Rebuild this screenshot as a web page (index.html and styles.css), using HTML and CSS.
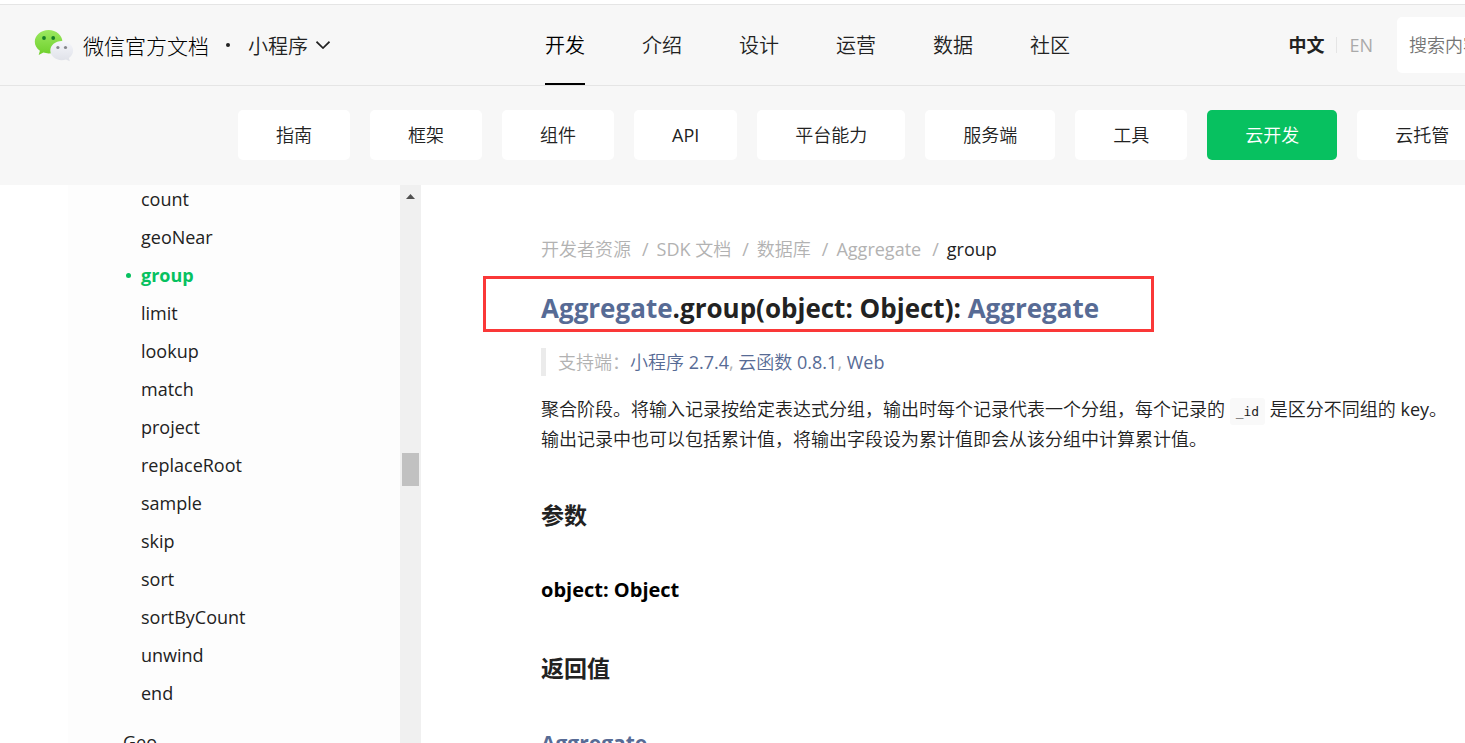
FILE: index.html
```html
<!DOCTYPE html>
<html lang="zh-CN">
<head>
<meta charset="utf-8">
<title>Aggregate.group | 微信开放文档</title>
<link rel="stylesheet" href="styles.css">
</head>
<body>
<header class="header">
  <div class="brand">
    <svg class="logo" viewBox="0 0 40 34" aria-hidden="true">
      <defs>
        <linearGradient id="green" x1="0" y1="0" x2="0" y2="1"><stop offset="0" stop-color="#9be860"/><stop offset="1" stop-color="#6fd02c"/></linearGradient>
        <linearGradient id="pale" x1="0" y1="0" x2="0" y2="1"><stop offset="0" stop-color="#f5f6fb"/><stop offset="1" stop-color="#dfe1e8"/></linearGradient>
      </defs>
      <path fill="url(#green)" d="M14.600 2C7 2 .8 7.200.8 13.700c0 3.700 2 6.900 5.100 9.100l-1.200 4.100 4.700-2.300c1.600.5 3.400.8 5.200.8 7.600 0 13.800-5.200 13.800-11.700S22.200 2 14.600 2z"/>
      <circle cx="10" cy="10" r="1.900" fill="#187e28"/><circle cx="19.200" cy="10" r="1.900" fill="#187e28"/>
      <path fill="url(#pale)" d="M27.700 13c6.300 0 11.400 4.300 11.400 9.600 0 3-1.600 5.600-4.200 7.400l.9 3.200-3.800-1.800c-1.300.5-2.800.8-4.300.8-6.300 0-11.400-4.300-11.400-9.600S21.400 13 27.700 13z"/>
      <circle cx="23.900" cy="19.500" r="1.600" fill="#85878c"/><circle cx="31.500" cy="19.500" r="1.600" fill="#85878c"/>
    </svg>
    <a class="brand-name" href="#">微信官方文档</a>
    <span class="brand-dot"></span>
    <button class="product" type="button">小程序
      <svg class="chevron" viewBox="0 0 14 8" aria-hidden="true"><path d="M.5.700l6.500 6.300 6.500-6.300" fill="none" stroke="currentColor" stroke-width="1.700"/></svg>
    </button>
  </div>
  <nav class="nav">
    <a class="nav-link nav-active" href="#">开发</a>
    <a class="nav-link" href="#">介绍</a>
    <a class="nav-link" href="#">设计</a>
    <a class="nav-link" href="#">运营</a>
    <a class="nav-link" href="#">数据</a>
    <a class="nav-link" href="#">社区</a>
  </nav>
  <div class="tools">
    <a class="lang lang-active" href="#">中文</a>
    <a class="lang lang-other" href="#">EN</a>
    <input class="search" type="search" placeholder="搜索内容" aria-label="搜索内容">
  </div>
</header>
<nav class="tabs">
  <a class="tab" href="#">指南</a>
  <a class="tab" href="#">框架</a>
  <a class="tab" href="#">组件</a>
  <a class="tab" href="#">API</a>
  <a class="tab" href="#">平台能力</a>
  <a class="tab" href="#">服务端</a>
  <a class="tab" href="#">工具</a>
  <a class="tab tab-active" href="#">云开发</a>
  <a class="tab" href="#">云托管</a>
</nav>
<div class="main">
  <aside class="sidebar">
    <ul class="menu">
      <li><a class="item" href="#">count</a></li>
      <li><a class="item" href="#">geoNear</a></li>
      <li><a class="item item-active" href="#">group</a></li>
      <li><a class="item" href="#">limit</a></li>
      <li><a class="item" href="#">lookup</a></li>
      <li><a class="item" href="#">match</a></li>
      <li><a class="item" href="#">project</a></li>
      <li><a class="item" href="#">replaceRoot</a></li>
      <li><a class="item" href="#">sample</a></li>
      <li><a class="item" href="#">skip</a></li>
      <li><a class="item" href="#">sort</a></li>
      <li><a class="item" href="#">sortByCount</a></li>
      <li><a class="item" href="#">unwind</a></li>
      <li><a class="item" href="#">end</a></li>
      <li><a class="item item-parent" href="#">Geo</a></li>
    </ul>
    <div class="scrollbar">
      <svg class="scroll-up" viewBox="0 0 9 5" aria-hidden="true"><path d="M0 5L4.500 0 9 5z" fill="#505050"/></svg>
      <div class="thumb"></div>
    </div>
  </aside>
  <main class="content">
    <nav class="crumbs">
      <a href="#">开发者资源</a><a href="#">SDK 文档</a><a href="#">数据库</a><a href="#">Aggregate</a><span class="current">group</span>
    </nav>
    <h1 class="title"><a href="#">Aggregate</a>.group(object: Object): <a href="#">Aggregate</a></h1>
    <blockquote class="support">支持端：<a href="#">小程序 2.7.4</a>, <a href="#">云函数 0.8.1</a>, <a href="#">Web</a></blockquote>
    <p class="text">聚合阶段。将输入记录按给定表达式分组，输出时每个记录代表一个分组，每个记录的 <code class="code">_id</code> 是区分不同组的 key。<br>输出记录中也可以包括累计值，将输出字段设为累计值即会从该分组中计算累计值。</p>
    <h2 class="section">参数</h2>
    <h3 class="type">object: Object</h3>
    <h2 class="section">返回值</h2>
    <h3 class="type type-link"><a href="#">Aggregate</a></h3>
  </main>
</div>
</body>
</html>
```

FILE: styles.css
```css
* { box-sizing: border-box; }
body {
  margin: 0;
  height: 100vh;
  display: flex;
  flex-direction: column;
  overflow: hidden;
  background: #fff;
  color: #222;
  font-family: "Open Sans", "Noto Sans CJK SC DemiLight", "Noto Sans CJK SC", sans-serif;
  font-size: 18px;
}
h1, h2, h3, .lang-active { font-family: "Open Sans", "Noto Sans CJK SC", sans-serif; }
a { color: inherit; text-decoration: none; }
ul { list-style: none; margin: 0; padding: 0; }

.header {
  flex: none;
  display: flex;
  align-items: stretch;
  height: 82px;
  margin-top: 4px;
  padding-left: 34px;
  background: #f7f7f7;
  border-top: 1px solid #e5e5e5;
  border-bottom: 1px solid #e5e5e5;
  font-size: 20px;
  overflow: hidden;
}
.brand { display: flex; align-items: center; width: 511px; flex: none; }
.logo { width: 40px; height: 34px; }
.brand-name { margin-left: 9px; font-family: "Noto Sans CJK SC", sans-serif; font-size: 21px; font-weight: 300; color: #000; }
.brand-dot { width: 4px; height: 4px; margin: 0 18px 0 17px; border-radius: 50%; background: #222; }
.product {
  display: flex;
  align-items: center;
  gap: 8px;
  padding: 0;
  border: 0;
  background: none;
  color: #222;
  font: inherit;
}
.chevron { width: 14px; height: 8px; }
.nav { display: flex; gap: 57px; }
.nav-link { display: flex; align-items: center; border-bottom: 2px solid transparent; white-space: nowrap; }
.nav-active { color: #000; border-bottom-color: #000; }
.tools { display: flex; align-items: center; margin-left: auto; margin-right: -103px; flex: none; font-size: 18px; }
.lang { line-height: 16px; }
.lang-active { font-weight: 700; padding-right: 12px; }
.lang-other { color: #aaa; padding-left: 12px; border-left: 1px solid #e5e5e5; }
.search {
  width: 171px;
  height: 56px;
  margin-left: 24px;
  padding: 0 12px;
  border: 0;
  border-radius: 5px;
  background: #fff;
  font: inherit;
}
.search::placeholder { color: #757575; }

.tabs {
  flex: none;
  display: flex;
  gap: 20px;
  padding: 24px 0 25px 238px;
  background: #f7f7f7;
  overflow: hidden;
}
.tab {
  flex: none;
  padding: 0 38px;
  border-radius: 5px;
  background: #fff;
  line-height: 50px;
}
.tab-active { background: #07c160; color: #fff; }

.main { flex: 1; min-height: 0; display: flex; }
.sidebar { flex: none; display: flex; width: 353px; margin-left: 68px; background: #fdfdfd; overflow: hidden; }
.menu { flex: 1; margin-top: -5px; }
.item { display: block; padding-left: 73px; line-height: 38px; }
.item-active { color: #07c160; font-weight: 700; }
.item-active::before {
  content: "";
  float: left;
  width: 5px;
  height: 5px;
  margin: 17px 0 0 -15px;
  border-radius: 50%;
  background: #07c160;
}
.item-parent { margin-top: 11px; padding-left: 55px; }
.scrollbar { width: 21px; padding: 9px 2px; background: #f0f0f0; }
.scroll-up { display: block; width: 9px; height: 5px; margin: 0 auto; }
.thumb { height: 33px; margin-top: 254px; background: #c1c1c1; }

.content { flex: 1; min-width: 0; padding: 50px 20px 0 120px; overflow: hidden; }
.crumbs { display: flex; line-height: 28px; color: #b2b2b2; white-space: nowrap; }
.crumbs a::after { content: "/"; margin: 0 8px 0 11px; }
.current { color: #222; }
.title { position: relative; width: fit-content; margin: 13px 0 16px; padding: 16px 0 8px; font-size: 26px; line-height: 32px; }
.title::after {
  content: "";
  position: absolute;
  inset: 0 -55px 0 -58px;
  border: 3px solid #fa3838;
  pointer-events: none;
}
.title a, .support a, .type a { color: #576b95; }
.support {
  margin: 0;
  padding-left: 12px;
  border-left: 5px solid #ebebeb;
  line-height: 28px;
  color: #b2b2b2;
}
.text { margin: 18px 0 44px; line-height: 30px; white-space: nowrap; }
.code {
  padding: 6px;
  border-radius: 3px;
  background: #f9f9f9;
  font-family: "DejaVu Sans Mono", monospace;
  font-size: 13px;
  line-height: 1;
}
.section { margin: 0 0 43px; font-size: 23px; line-height: 34px; }
.type { margin: 0 0 46px; font-size: 20px; line-height: 30px; color: #000; }
.type-link { font-size: 21px; }
```
